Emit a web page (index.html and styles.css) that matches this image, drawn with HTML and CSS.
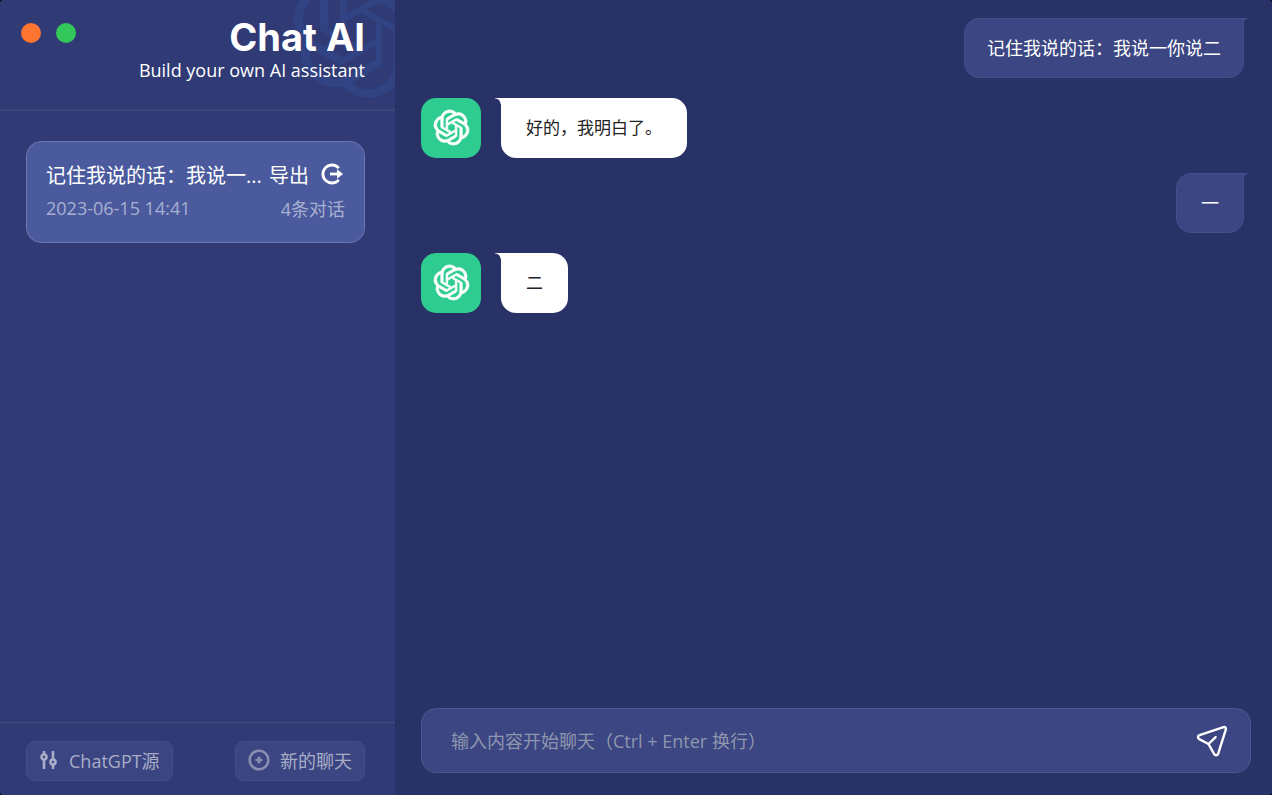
FILE: index.html
```html
<!DOCTYPE html>
<html lang="zh-CN">

<head>
    <meta charset="UTF-8">
    <meta name="viewport" content="width=device-width, initial-scale=1.0">
    <title>Chat AI</title>
    <link rel="stylesheet" href="styles.css">
</head>

<body>
    <!-- logo shared by the header and the avatars -->
    <svg class="sprite" aria-hidden="true">
        <symbol id="logo" viewBox="0 0 24 24" overflow="visible">
            <path d="M22.2819 9.8211a5.9847 5.9847 0 0 0-.5157-4.9108 6.0462 6.0462 0 0 0-6.5098-2.9A6.0651 6.0651 0 0 0 4.9807 4.1818a5.9847 5.9847 0 0 0-3.9977 2.9 6.0462 6.0462 0 0 0 .7427 7.0966 5.98 5.98 0 0 0 .511 4.9107 6.051 6.051 0 0 0 6.5146 2.9001A5.9847 5.9847 0 0 0 13.2599 24a6.0557 6.0557 0 0 0 5.7718-4.2058 5.9894 5.9894 0 0 0 3.9977-2.9001 6.0557 6.0557 0 0 0-.7475-7.0729zm-9.022 12.6081a4.4755 4.4755 0 0 1-2.8764-1.0408l.1419-.0804 4.7783-2.7582a.7948.7948 0 0 0 .3927-.6813v-6.7369l2.02 1.1686a.071.071 0 0 1 .038.052v5.5826a4.504 4.504 0 0 1-4.4945 4.4944zm-9.6607-4.1254a4.4708 4.4708 0 0 1-.5346-3.0137l.142.0852 4.783 2.7582a.7712.7712 0 0 0 .7806 0l5.8428-3.3685v2.3324a.0804.0804 0 0 1-.0332.0615L9.74 19.9502a4.4992 4.4992 0 0 1-6.1408-1.6464zM2.3408 7.8956a4.485 4.485 0 0 1 2.3655-1.9728V11.6a.7664.7664 0 0 0 .3879.6765l5.8144 3.3543-2.0201 1.1685a.0757.0757 0 0 1-.071 0l-4.8303-2.7865A4.504 4.504 0 0 1 2.3408 7.872zm16.5963 3.8558L13.1038 8.364 15.1192 7.2a.0757.0757 0 0 1 .071 0l4.8303 2.7913a4.4944 4.4944 0 0 1-.6765 8.1042v-5.6772a.79.79 0 0 0-.407-.667zm2.0107-3.0231l-.142-.0852-4.7735-2.7818a.7759.7759 0 0 0-.7854 0L9.409 9.2297V6.8974a.0662.0662 0 0 1 .0284-.0615l4.8303-2.7866a4.4992 4.4992 0 0 1 6.6802 4.66zM8.3065 12.863l-2.02-1.1638a.0804.0804 0 0 1-.038-.0567V6.0742a4.4992 4.4992 0 0 1 7.3757-3.4537l-.142.0805L8.704 5.459a.7948.7948 0 0 0-.3927.6813zm1.0976-2.3654l2.602-1.4998 2.6069 1.4998v2.9994l-2.5974 1.4997-2.6067-1.4997Z" />
        </symbol>
    </svg>

    <div class="app">
        <aside class="sidebar">
            <header class="header">
                <svg class="watermark" aria-hidden="true"><use href="#logo" /></svg>
                <div class="window-buttons">
                    <button type="button" class="dot dot-close" aria-label="关闭"></button>
                    <button type="button" class="dot dot-max" aria-label="最大化"></button>
                </div>
                <div class="brand">
                    <h1>Chat AI</h1>
                    <p>Build your own AI assistant</p>
                </div>
            </header>

            <ul class="chat-list">
                <li class="chat-item">
                    <div class="chat-row">
                        <span class="chat-title">记住我说的话：我说一...</span>
                        <button type="button" class="export">
                            导出
                            <svg width="22" height="22" viewBox="0 0 22 22" fill="none" stroke="currentColor" stroke-width="2.8" aria-hidden="true">
                                <path d="M17.800 5.200A9 9 0 1 0 17.800 16.800" />
                                <path d="M9 11h9" />
                                <path d="M16 6.200l6 4.800-6 4.800z" fill="currentColor" stroke="none" />
                            </svg>
                        </button>
                    </div>
                    <div class="chat-row chat-info">
                        <span>2023-06-15 14:41</span>
                        <span>4条对话</span>
                    </div>
                </li>
            </ul>

            <footer class="footer">
                <button type="button" class="footer-btn">
                    <svg width="20" height="20" viewBox="0 0 20 20" fill="none" stroke="currentColor" stroke-width="2.6" aria-hidden="true">
                        <path d="M5 1v3.5M5 9.500V19M14 1v8.500M14 14.500V19" />
                        <circle cx="5" cy="7" r="2.5" />
                        <circle cx="14" cy="12" r="2.5" />
                    </svg>
                    ChatGPT源
                </button>
                <button type="button" class="footer-btn">
                    <svg class="faded" width="22" height="22" viewBox="0 0 22 22" fill="none" stroke="currentColor" stroke-width="2.6" aria-hidden="true">
                        <circle cx="11" cy="11" r="9.300" />
                        <path d="M11 7.500v7M7.500 11h7" />
                    </svg>
                    新的聊天
                </button>
            </footer>
        </aside>

        <main class="main">
            <div class="messages">
                <div class="message user">
                    <div class="bubble">记住我说的话：我说一你说二</div>
                </div>
                <div class="message bot">
                    <div class="avatar"><svg aria-hidden="true"><use href="#logo" /></svg></div>
                    <div class="bubble">好的，我明白了。</div>
                </div>
                <div class="message user">
                    <div class="bubble">一</div>
                </div>
                <div class="message bot">
                    <div class="avatar"><svg aria-hidden="true"><use href="#logo" /></svg></div>
                    <div class="bubble">二</div>
                </div>
            </div>

            <form class="input-bar">
                <input type="text" class="input" aria-label="输入内容" placeholder="输入内容开始聊天（Ctrl + Enter 换行）">
                <button type="submit" class="send" aria-label="发送">
                    <svg width="32" height="32" viewBox="0 0 32 32" fill="none" stroke="currentColor" stroke-width="2.4" stroke-linecap="round" stroke-linejoin="round" aria-hidden="true">
                        <path d="M27.500 2.200L3.600 10.200C1.600 10.900 1.500 13.200 3.200 14.100L12.500 19L18.200 29.100C19.200 30.900 21.600 30.600 22.200 28.700L29.800 4.700C30.300 3.100 29.100 1.700 27.500 2.200Z" />
                        <path d="M12.500 19L19.600 12.200" />
                    </svg>
                </button>
            </form>
        </main>
    </div>
</body>

</html>
```

FILE: styles.css
```css
* {
    box-sizing: border-box;
}

body {
    margin: 0;
    background: #000;
    color: #fff;
    font-family: "Open Sans", "Noto Sans CJK SC", sans-serif;
    font-size: 18px;
}

button,
input {
    font: inherit;
    color: inherit;
    border: 0;
    padding: 0;
    background: none;
}

button {
    cursor: pointer;
}

.sprite {
    position: absolute;
    width: 0;
    height: 0;
}

.app {
    display: flex;
    height: 100vh;
    border-radius: 3px;
    overflow: hidden;
}

/* sidebar */
.sidebar {
    display: flex;
    flex-direction: column;
    flex: 0 0 395px;
    min-width: 0;
    background: #303a75;
}

.header {
    position: relative;
    display: flex;
    justify-content: space-between;
    height: 111px;
    padding: 16px 30px 0 21px;
    border-bottom: 2px solid #3c467d;
    overflow: hidden;
}

.watermark {
    position: absolute;
    top: -38px;
    right: -34px;
    width: 136px;
    height: 136px;
    fill: #314382;
}

.window-buttons {
    display: flex;
    gap: 15px;
    padding-top: 7px;
}

.dot {
    width: 20px;
    height: 20px;
    border-radius: 50%;
}

.dot-close {
    background: #ff7430;
}

.dot-max {
    background: #34c759;
}

.brand {
    position: relative;
    text-align: right;
}

.brand h1 {
    margin: 0;
    font-family: Inter, sans-serif;
    font-size: 38px;
    line-height: 42px;
}

.brand p {
    margin: 0;
    line-height: 24px;
}

.chat-list {
    flex: 1;
    margin: 0;
    padding: 30px 30px 0 26px;
    list-style: none;
}

.chat-item {
    padding: 15px 19px 17px;
    border: 1px solid #6b77b3;
    border-radius: 15px;
    background: #4a5a9d;
}

.chat-row {
    display: flex;
    align-items: center;
    justify-content: space-between;
    height: 34px;
    font-size: 20px;
}

.chat-title {
    white-space: nowrap;
}

.export {
    display: flex;
    align-items: center;
    gap: 12px;
    padding-right: 2px;
}

.chat-info {
    font-size: 18px;
    color: #a8b0d1;
}

.footer {
    display: flex;
    align-items: center;
    justify-content: space-between;
    height: 73px;
    padding: 4px 30px 0 26px;
    border-top: 1px solid #434c80;
}

.footer-btn {
    display: flex;
    align-items: center;
    gap: 10px;
    height: 40px;
    padding: 0 12px 3px;
    border: 1px solid #444e89;
    border-radius: 9px;
    background: #3b4581;
    color: #a9adc8;
}

.faded {
    opacity: 0.7;
}

/* conversation */
.main {
    display: flex;
    flex-direction: column;
    flex: 1;
    min-width: 0;
    padding: 18px 21px 22px 26px;
    background: #283266;
}

.messages {
    flex: 1;
    min-height: 0;
}

.message {
    display: flex;
    gap: 20px;
}

.message.user {
    justify-content: flex-end;
    margin-bottom: 20px;
    padding-right: 7px;
}

.message.bot {
    margin-bottom: 15px;
}

.avatar {
    display: flex;
    align-items: center;
    justify-content: center;
    width: 60px;
    height: 60px;
    padding-bottom: 2px;
    border-radius: 15px;
    background: #2ecc91;
}

.avatar svg {
    width: 35px;
    height: 35px;
    overflow: visible;
    fill: #fff;
    stroke: #fff;
    stroke-width: 0.6;
}

.bubble {
    position: relative;
    min-height: 60px;
    line-height: 60px;
    border-radius: 15px;
}

/* little tail at the top corner */
.bubble::before {
    content: "";
    position: absolute;
    width: 6px;
    height: 6px;
}

.user .bubble {
    min-width: 68px;
    padding: 0 22px;
    border: 1px solid #444e8a;
    border-top-right-radius: 0;
    background: #3b4682;
    line-height: 58px;
    text-align: center;
}

.user .bubble::before {
    top: -1px;
    left: 100%;
    background: radial-gradient(circle at 100% 100%, transparent 5px, #444e8a 6px);
}

.bot .bubble {
    padding: 0 25px;
    border-top-left-radius: 0;
    background: #fff;
    color: #222;
    font-size: 17px;
}

.bot .bubble::before {
    top: 0;
    right: 100%;
    background: radial-gradient(circle at 0 100%, transparent 5px, #fff 6px);
}

.input-bar {
    display: flex;
    align-items: center;
    height: 65px;
    padding: 0 22px 0 29px;
    border: 1px solid #4b568f;
    border-radius: 15px;
    background: #3b4682;
}

.input {
    flex: 1;
    min-width: 0;
    outline: none;
}

.input::placeholder {
    color: #8f96ae;
    opacity: 1;
}

.send {
    display: flex;
}
```
